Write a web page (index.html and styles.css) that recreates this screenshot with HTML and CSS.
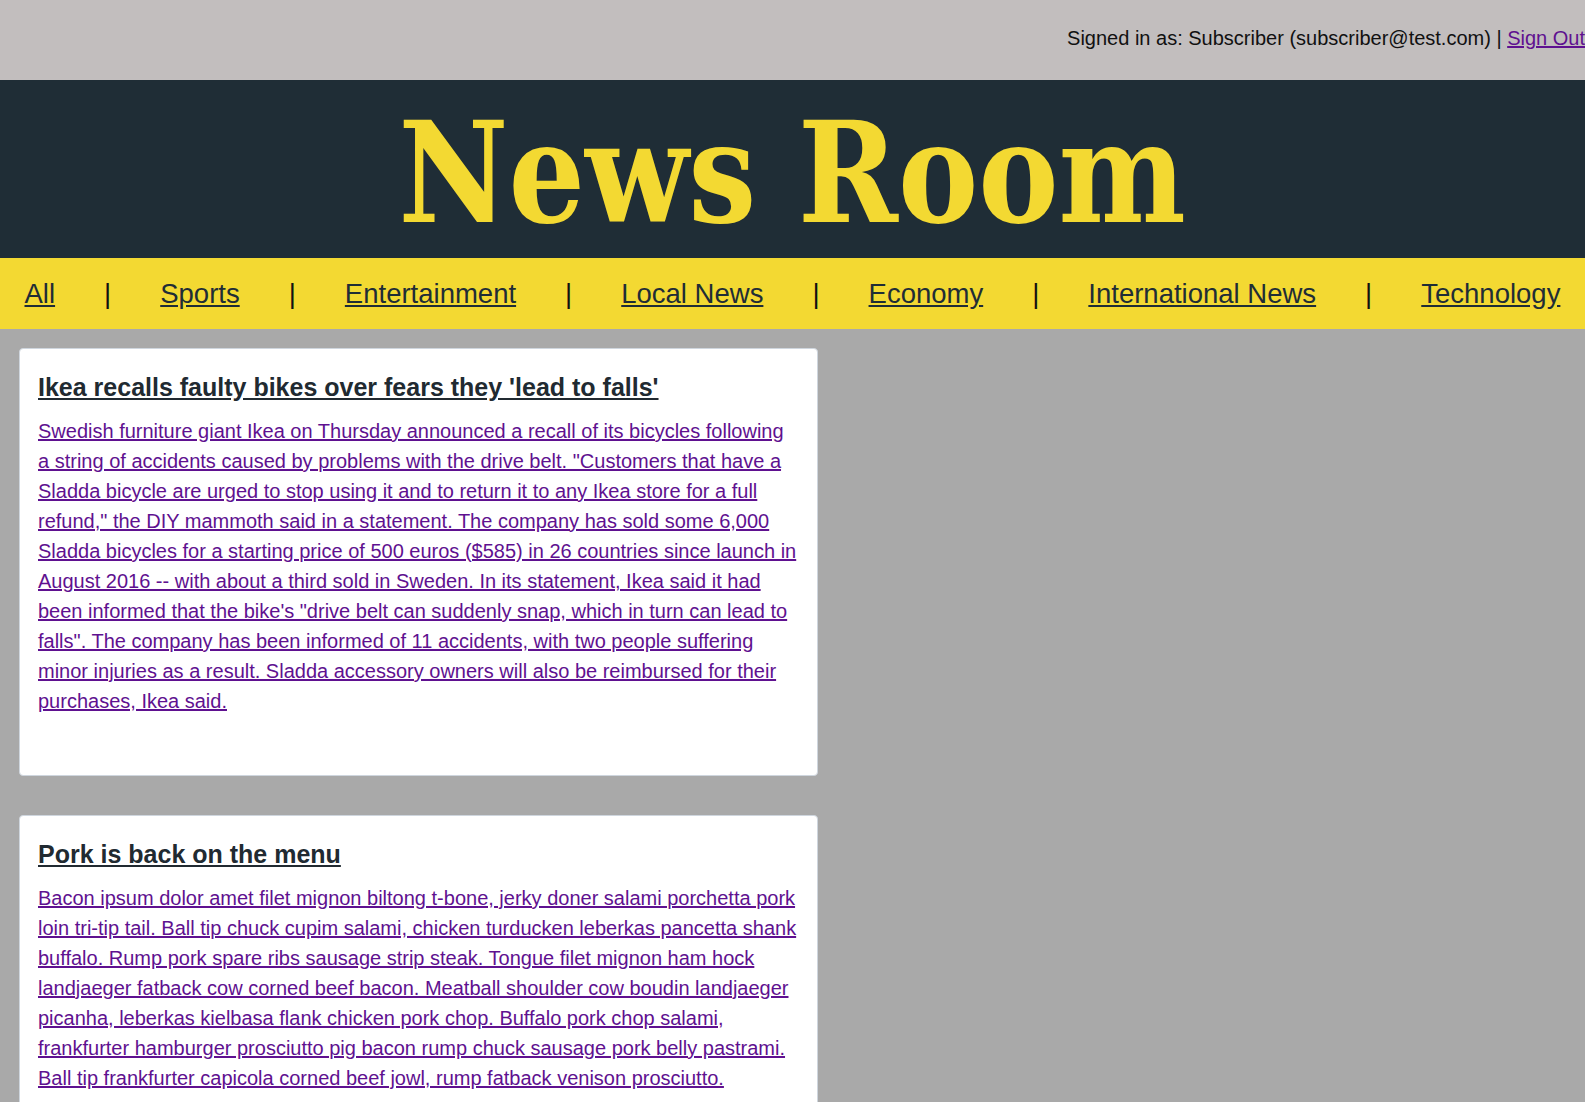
FILE: index.html
```html
<!DOCTYPE html>
<html lang="en">
<head>
<meta charset="utf-8">
<title>News Room</title>
<link rel="stylesheet" href="styles.css">
</head>
<body>
<div class="topbar">
  <span class="signed">Signed in as: Subscriber (subscriber@test.com) | <a href="#" class="signout">Sign Out</a></span>
</div>
<header class="masthead">
  <h1 class="title"><span class="title-text">News Room</span></h1>
</header>
<nav class="nav">
  <a href="#" class="nav-link">All</a><span class="sep">|</span>
  <a href="#" class="nav-link">Sports</a><span class="sep">|</span>
  <a href="#" class="nav-link">Entertainment</a><span class="sep">|</span>
  <a href="#" class="nav-link">Local News</a><span class="sep">|</span>
  <a href="#" class="nav-link">Economy</a><span class="sep">|</span>
  <a href="#" class="nav-link">International News</a><span class="sep">|</span>
  <a href="#" class="nav-link">Technology</a>
</nav>
<main class="feed">
  <article class="card">
    <h2 class="card-title"><a href="#">Ikea recalls faulty bikes over fears they 'lead to falls'</a></h2>
    <p class="card-body"><a href="#">Swedish furniture giant Ikea on Thursday announced a recall of its bicycles following a string of accidents caused by problems with the drive belt. "Customers that have a Sladda bicycle are urged to stop using it and to return it to any Ikea store for a full refund," the DIY mammoth said in a statement. The company has sold some 6,000 Sladda bicycles for a starting price of 500 euros ($585) in 26 countries since launch in August 2016 -- with about a third sold in Sweden. In its statement, Ikea said it had been informed that the bike's "drive belt can suddenly snap, which in turn can lead to falls". The company has been informed of 11 accidents, with two people suffering minor injuries as a result. Sladda accessory owners will also be reimbursed for their purchases, Ikea said.</a></p>
  </article>
  <article class="card">
    <h2 class="card-title"><a href="#">Pork is back on the menu</a></h2>
    <p class="card-body"><a href="#">Bacon ipsum dolor amet filet mignon biltong t-bone, jerky doner salami porchetta pork loin tri-tip tail. Ball tip chuck cupim salami, chicken turducken leberkas pancetta shank buffalo. Rump pork spare ribs sausage strip steak. Tongue filet mignon ham hock landjaeger fatback cow corned beef bacon. Meatball shoulder cow boudin landjaeger picanha, leberkas kielbasa flank chicken pork chop. Buffalo pork chop salami, frankfurter hamburger prosciutto pig bacon rump chuck sausage pork belly pastrami. Ball tip frankfurter capicola corned beef jowl, rump fatback venison prosciutto.</a></p>
  </article>
</main>
</body>
</html>
```
FILE: styles.css
```css
html, body {
  margin: 0;
  padding: 0;
}
body {
  background: #a9a9a9;
  font-family: "Liberation Sans", Arial, sans-serif;
  overflow: hidden;
}
.topbar {
  height: 80px;
  box-sizing: border-box;
  padding-bottom: 3px;
  background: #c2bebe;
  display: flex;
  justify-content: flex-end;
  align-items: center;
  font-size: 20px;
  color: #111;
  white-space: nowrap;
}
.signout {
  color: #5f1190;
}
.masthead {
  background: #1f2d36;
  height: 178px;
  box-sizing: border-box;
  padding-top: 11px;
  text-align: center;
  overflow: hidden;
}
.title {
  margin: 0;
  font-family: "DejaVu Serif Condensed", "DejaVu Serif", serif;
  font-stretch: condensed;
  font-weight: bold;
  font-size: 140px;
  line-height: normal;
  color: #f3d932;
}
.title-text {
  display: inline-block;
  transform: scaleX(0.955);
}
.nav {
  background: #f3d932;
  height: 71px;
  display: flex;
  justify-content: space-around;
  align-items: center;
  font-size: 27.5px;
  color: #111;
}
.nav-link {
  color: #1f2d36;
}
.sep {
  color: #111;
}
.feed {
  padding: 19px 0 0 19px;
  display: flex;
  flex-direction: column;
  gap: 39px;
}
.card {
  width: 799px;
  box-sizing: border-box;
  background: #fff;
  border: 1px solid #cfd6de;
  border-radius: 4px;
  padding: 24px 18px 19px 18px;
}
.card-title {
  margin: 0 0 14px 0;
  font-size: 25px;
  font-weight: bold;
  line-height: normal;
}
.card-title a {
  color: #212a31;
}
.card-body {
  margin: 0 0 40px 0;
  font-size: 20px;
  line-height: 30px;
}
.card-body a {
  color: #5f1190;
}
```
